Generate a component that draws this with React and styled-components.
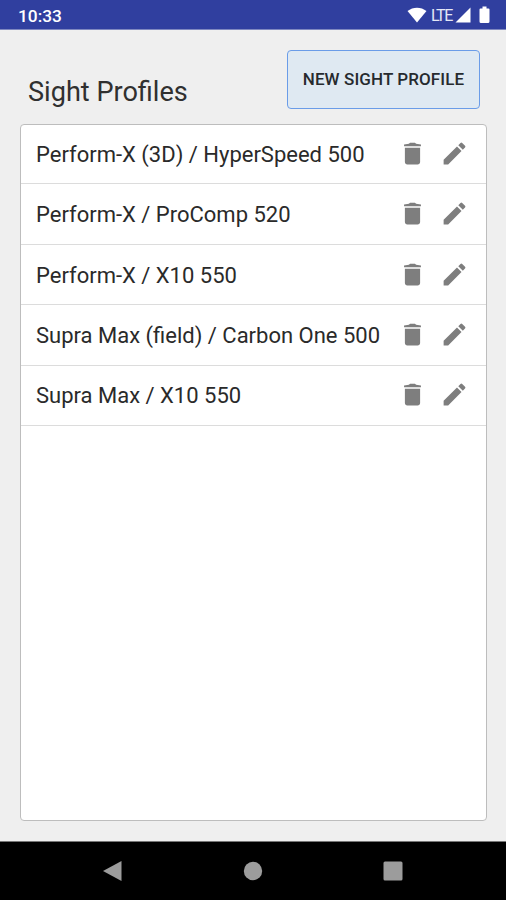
import React from 'react';
import styled, { createGlobalStyle } from 'styled-components';

const GlobalStyle = createGlobalStyle`
  * {
    box-sizing: border-box;
  }

  body {
    margin: 0;
    background-color: #efefef;
    font-family: Roboto, 'Liberation Sans', sans-serif;
  }
`;

const Screen = styled.div`
  display: flex;
  flex-direction: column;
  height: 900px;
  background-color: #efefef;
`;

const StatusBar = styled.header`
  display: flex;
  align-items: center;
  justify-content: space-between;
  height: 30px;
  padding: 1px 15px 0 18px;
  border-bottom: 1px solid #7f88c0;
  background-color: #303f9f;
  color: white;
`;

const Clock = styled.span`
  padding-top: 1px;
  font-size: 17.3px;
  font-weight: 500;
  line-height: 28px;
`;

const StatusIcons = styled.div`
  display: flex;
  align-items: center;

  svg {
    display: block;
    fill: white;
  }
`;

const Network = styled.span`
  width: 24px;
  margin: 1px 0 0 4px;
  font-size: 16px;
  letter-spacing: -1.4px;
  white-space: nowrap;
  color: #e4e7f6;
`;

const Content = styled.main`
  flex: 1;
  display: flex;
  flex-direction: column;
  padding: 20px 19px 20px 20px;
`;

const TitleRow = styled.div`
  display: flex;
  justify-content: space-between;
  height: 74px;
  padding: 0 7px 0 8px;
`;

const Title = styled.h1`
  margin: 25px 0 0;
  font-size: 27.1px;
  font-weight: 400;
  line-height: 34px;
  color: #303030;
`;

const NewButton = styled.button`
  width: 193px;
  height: 59px;
  padding: 0 0 1px;
  border: 1px solid #6a9ce8;
  border-radius: 4px;
  background-color: #dfe9f2;
  font-family: inherit;
  font-size: 17px;
  font-weight: 500;
  letter-spacing: 0.1px;
  white-space: nowrap;
  color: #262a2e;
`;

const List = styled.ul`
  flex: 1;
  margin: 0;
  padding: 0;
  list-style: none;
  border: 1px solid #bdbdbd;
  border-radius: 4px;
  background-color: white;
`;

const Row = styled.li`
  display: flex;
  align-items: center;
  height: 60.4px;
  padding: 0 17px 0 15px;
  border-bottom: 1px solid #dcdcdc;

  &:first-child {
    height: 59.4px;
  }
`;

const Name = styled.span`
  flex: 1;
  padding-top: 1.2px;
  font-size: 22px;
  font-weight: 400;
  white-space: nowrap;
  color: #2a2a2a;
`;

const Action = styled.svg`
  flex: none;
  display: block;
  width: 29px;
  height: 29px;
  margin: 0 0 0.6px 13px;
  fill: #7e7e7e;
`;

const NavBar = styled.nav`
  display: flex;
  align-items: center;
  justify-content: space-between;
  height: 59px;
  padding: 0 103px 0 102px;
  border-top: 1px solid #777;
  background-color: black;

  svg {
    display: block;
    fill: #9c9c9c;
  }
`;

const profiles = [
  'Perform-X (3D) / HyperSpeed 500',
  'Perform-X / ProComp 520',
  'Perform-X / X10 550',
  'Supra Max (field) / Carbon One 500',
  'Supra Max / X10 550',
];

const ProfileRow = ({ name }) => {
  return (
    <Row>
      <Name>{name}</Name>
      <Action viewBox="0 0 24 24">
        <path d="M5.7 19c0 1.1.9 2 2 2h8.6c1.1 0 2-.9 2-2V7.2H5.7zM19 5.9H5V4.5L9 4l1-.8h4l1 .8 4 .5z" />
      </Action>
      <Action viewBox="0 0 24 24">
        <path d="M3 17.25V21h3.75L17.81 9.94l-3.75-3.75L3 17.25zM20.71 7.04a1 1 0 0 0 0-1.41l-2.34-2.34a1 1 0 0 0-1.41 0l-1.83 1.83 3.75 3.75 1.83-1.83z" />
      </Action>
    </Row>
  );
};

const App = () => {
  return (
    <Screen>
      <GlobalStyle />
      <StatusBar>
        <Clock>10:33</Clock>
        <StatusIcons>
          <svg width="20" height="16" viewBox="0 0 20 16">
            <path d="M0.5 4C6 -0.5 14 -0.5 19.5 4L10 15.5Z" />
          </svg>
          <Network>LTE</Network>
          <svg width="16" height="16" viewBox="0 0 16 16">
            <path d="M15.5 0.5V15.5H0.5Z" />
          </svg>
          <svg width="20" height="18" viewBox="0 0 20 18">
            <path d="M11.5 0.5h4v2h2q1 0 1 1v12q0 1.5-1.5 1.5h-7q-1.5 0-1.5-1.5v-12q0-1 1-1h2z" />
          </svg>
        </StatusIcons>
      </StatusBar>
      <Content>
        <TitleRow>
          <Title>Sight Profiles</Title>
          <NewButton>NEW SIGHT PROFILE</NewButton>
        </TitleRow>
        <List>
          {profiles.map((name) => (
            <ProfileRow key={name} name={name} />
          ))}
        </List>
      </Content>
      <NavBar>
        <svg width="20" height="22" viewBox="0 0 20 22">
          <path d="M19.5 1V21L1 11Z" />
        </svg>
        <svg width="20" height="20" viewBox="0 0 20 20">
          <circle cx="10" cy="10" r="9.2" />
        </svg>
        <svg width="20" height="20" viewBox="0 0 20 20">
          <rect x="0.5" y="0.5" width="19" height="19" rx="1.5" />
        </svg>
      </NavBar>
    </Screen>
  );
};

export default App;
